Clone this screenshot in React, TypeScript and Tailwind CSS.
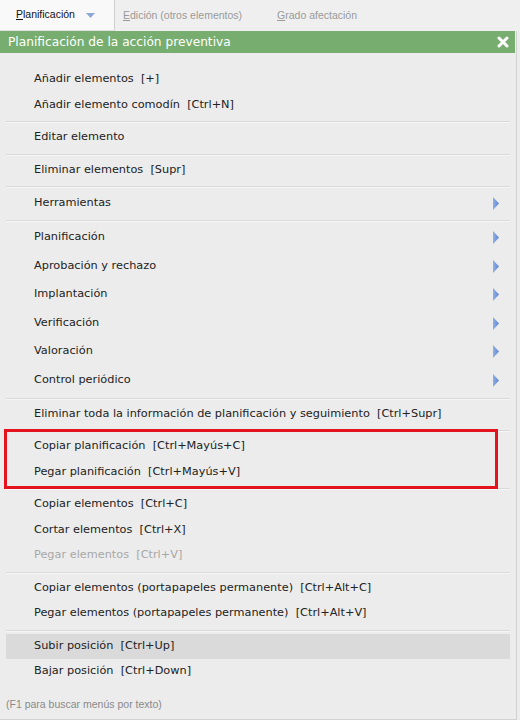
import React from "react";

type Item = { label: string; sub?: boolean; disabled?: boolean; hl?: boolean };
type Group = { rows: Item[]; h?: string };

const groups: Group[] = [
  { rows: [{ label: "Añadir elementos  [+]" }, { label: "Añadir elemento comodín  [Ctrl+N]" }] },
  { rows: [{ label: "Editar elemento" }] },
  { rows: [{ label: "Eliminar elementos  [Supr]" }] },
  { h: "h-[26.5px]", rows: [{ label: "Herramientas", sub: true }] },
  {
    h: "h-[28.5px]",
    rows: [
      { label: "Planificación", sub: true },
      { label: "Aprobación y rechazo", sub: true },
      { label: "Implantación", sub: true },
      { label: "Verificación", sub: true },
      { label: "Valoración", sub: true },
      { label: "Control periódico", sub: true },
    ],
  },
  { rows: [{ label: "Eliminar toda la información de planificación y seguimiento  [Ctrl+Supr]" }] },
  { rows: [{ label: "Copiar planificación  [Ctrl+Mayús+C]" }, { label: "Pegar planificación  [Ctrl+Mayús+V]" }] },
  {
    rows: [
      { label: "Copiar elementos  [Ctrl+C]" },
      { label: "Cortar elementos  [Ctrl+X]" },
      { label: "Pegar elementos  [Ctrl+V]", disabled: true },
    ],
  },
  {
    rows: [
      { label: "Copiar elementos (portapapeles permanente)  [Ctrl+Alt+C]" },
      { label: "Pegar elementos (portapapeles permanente)  [Ctrl+Alt+V]" },
    ],
  },
  { rows: [{ label: "Subir posición  [Ctrl+Up]", hl: true }, { label: "Bajar posición  [Ctrl+Down]" }] },
];

function Arrow() {
  return (
    <svg width="8" height="13" viewBox="0 0 8 13" className="block">
      <defs>
        <linearGradient id="ag" x1="0" y1="0" x2="1" y2="0">
          <stop offset="0" stopColor="#8fb0e6" />
          <stop offset="1" stopColor="#5f86cf" />
        </linearGradient>
      </defs>
      <polygon points="1,0 7,6.5 1,13" fill="url(#ag)" />
    </svg>
  );
}

function Row({ item, h }: { item: Item; h?: string }) {
  return (
    <div
      className={`flex items-center pl-[28px] pr-[10px] ${h ?? "h-[25.5px]"} ${
        item.hl ? "bg-[#dadada]" : ""
      }`}
    >
      <span
        className={`flex-1 whitespace-pre text-[11.3px] ${item.disabled ? "text-[#a8a8a8]" : "text-[#222]"}`}
        style={{ fontFamily: '"DejaVu Sans", Verdana, sans-serif' }}
      >
        {item.label}
      </span>
      {item.sub && <Arrow />}
    </div>
  );
}

function Sep() {
  return (
    <div className="pt-[3px] pb-[2px]">
      <div className="h-[1px] bg-[#d9d9d9]" />
      <div className="h-[1px] bg-[#f6f6f6]" />
    </div>
  );
}

export default function App() {
  return (
    <div
      className="w-[520px] h-[720px] bg-[#ececec] flex flex-col overflow-hidden"
      style={{ fontFamily: '"Liberation Sans", Arial, sans-serif' }}
    >
      {/* tab bar */}
      <div className="h-[31px] flex items-stretch bg-[#efefef] text-[10.5px]">
        <div className="w-[115px] bg-[#f9f9f9] border-r border-[#cfcfcf] border-b border-b-[#e0e0e0] flex items-center pl-[16px] gap-[11px] text-[#111]">
          <span>
            <span className="underline">P</span>lanificación
          </span>
          <svg width="9" height="5" viewBox="0 0 9 5">
            <polygon points="0,0 9,0 4.5,5" fill="#8ea7d4" />
          </svg>
        </div>
        <div className="flex items-center pl-[8px] text-[#9a9a9a]">
          <span>
            <span className="underline">E</span>dición (otros elementos)
          </span>
        </div>
        <div className="flex items-center pl-[35px] text-[#9a9a9a]">
          <span>
            <span className="underline">G</span>rado afectación
          </span>
        </div>
      </div>

      <div className="flex-1 flex flex-col border-r border-b border-[#d2d2d2] w-[517px]">
        {/* header */}
        <div className="h-[22px] bg-[#77ae6f] flex items-center justify-between pl-[8px] pr-[6px] mr-[1px]">
          <span
            className="text-white text-[12.2px]"
            style={{ fontFamily: '"DejaVu Sans", Verdana, sans-serif' }}
          >
            Planificación de la acción preventiva
          </span>
          <svg width="12" height="12" viewBox="0 0 12 12">
            <path d="M2 2 L10 10 M10 2 L2 10" stroke="white" strokeWidth="3" strokeLinecap="round" />
          </svg>
        </div>

        {/* menu */}
        <div className="relative flex-1 flex flex-col px-[6px] pt-[14px]">
          {groups.map((g, gi) => (
            <React.Fragment key={gi}>
              {gi > 0 && <Sep />}
              {g.rows.map((r, ri) => (
                <Row key={ri} item={r} h={g.h} />
              ))}
            </React.Fragment>
          ))}
          <div className="flex-1" />
          <div className="text-[10.5px] text-[#8a8a8a] pb-[6px]">(F1 para buscar menús por texto)</div>

          <div className="absolute left-[4px] top-[376px] w-[494px] h-[60px] border-[3px] border-[#e3141d]" />
        </div>
      </div>
    </div>
  );
}
